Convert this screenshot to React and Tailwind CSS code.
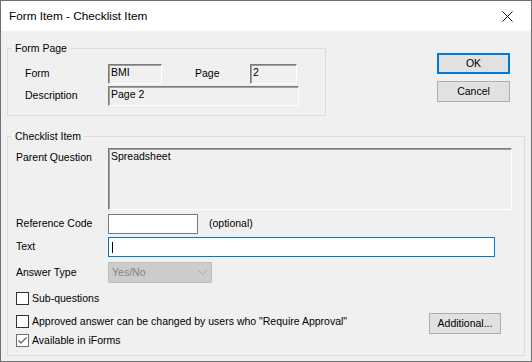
import React from 'react';

const font = { fontFamily: '"Liberation Sans", Arial, sans-serif' };

function SunkenBox({ className = '', children }) {
  return (
    <div
      className={`border-t border-l border-r border-b border-t-[#7a7a7a] border-l-[#7a7a7a] border-r-white border-b-white shadow-[inset_1px_1px_0_#a0a0a0] pl-[2px] pt-[1px] leading-[13px] text-[10.5px] text-black bg-[#f0f0f0] ${className}`}
    >
      {children}
    </div>
  );
}

function Checkbox({ checked, label }) {
  return (
    <div className="flex items-center">
      <div
        className={`w-[13px] h-[13px] bg-white border ${checked ? 'border-[#6d6d6d]' : 'border-[#333333]'} flex items-center justify-center`}
      >
        {checked && (
          <svg width="11" height="11" viewBox="0 0 11 11">
            <path d="M1.5 5.5 L4 8 L9.5 2.5" fill="none" stroke="#5a5a5a" strokeWidth="1.2" />
          </svg>
        )}
      </div>
      <span className="ml-[3px] text-[10.5px] leading-[13px]">{label}</span>
    </div>
  );
}

function Button({ children, primary, className = '' }) {
  return (
    <button
      type="button"
      className={`h-[21px] text-[10.5px] leading-[13px] bg-[#e1e1e1] text-black ${primary ? 'border-2 border-[#0078d7]' : 'border border-[#adadad]'} ${className}`}
    >
      {children}
    </button>
  );
}

export default function App() {
  return (
    <div style={font} className="w-[532px] h-[362px] border border-[#6f6f6f] bg-[#f0f0f0] flex flex-col text-black">
      <div className="h-[30px] bg-white flex items-center justify-between pl-[8px] pr-[18px] shrink-0">
        <span className="text-[11.8px] leading-[16px]">Form Item - Checklist Item</span>
        <svg width="11" height="11" viewBox="0 0 11 11">
          <path d="M0.5 0.5 L10.5 10.5 M10.5 0.5 L0.5 10.5" stroke="#111" strokeWidth="1" />
        </svg>
      </div>

      <div className="pl-[6px] pt-[10px] text-[10.5px]">
        <div className="flex items-start">
          <fieldset className="w-[319px] border border-[#dcdcdc]">
            <legend className="ml-[4px] px-[3px] leading-[14px]">Form Page</legend>
            <div className="pt-[9px] pl-[17px] pb-[9px]">
              <div className="flex items-center h-[20px]">
                <span className="w-[83px]">Form</span>
                <SunkenBox className="w-[54px] h-[20px]">BMI</SunkenBox>
                <span className="ml-[33px] w-[55px]">Page</span>
                <SunkenBox className="w-[47px] h-[20px]">2</SunkenBox>
              </div>
              <div className="flex items-center h-[20px] mt-[2px]">
                <span className="w-[83px]">Description</span>
                <SunkenBox className="w-[191px] h-[20px]">Page 2</SunkenBox>
              </div>
            </div>
          </fieldset>
          <div className="ml-[111px] mt-[12px] flex flex-col">
            <Button primary className="w-[73px]">OK</Button>
            <Button className="w-[73px] mt-[7px]">Cancel</Button>
          </div>
        </div>

        <fieldset className="w-[518px] h-[227px] mt-[13px] border border-[#dcdcdc]">
          <legend className="ml-[4px] px-[3px] leading-[14px]">Checklist Item</legend>
          <div className="pt-[5px] pl-[8px]">
            <div className="flex items-start">
              <span className="w-[92px] mt-[3px] leading-[13px]">Parent Question</span>
              <SunkenBox className="w-[404px] h-[62px]">Spreadsheet</SunkenBox>
            </div>
            <div className="flex items-center mt-[4px] h-[20px]">
              <span className="w-[92px]">Reference Code</span>
              <div className="w-[90px] h-[20px] bg-white border border-[#7a7a7a]" />
              <span className="ml-[11px]">(optional)</span>
            </div>
            <div className="flex items-center mt-[3px] h-[20px]">
              <span className="w-[92px]">Text</span>
              <div className="w-[387px] h-[20px] bg-white border border-[#0078d7] flex items-center pl-[3px]">
                <div className="w-px h-[11px] bg-black" />
              </div>
            </div>
            <div className="flex items-center mt-[5px] h-[21px]">
              <span className="w-[92px]">Answer Type</span>
              <div className="w-[104px] h-[21px] bg-[#cccccc] border border-[#bfbfbf] flex items-center justify-between pl-[3px] pr-[4px]">
                <span className="text-[#838383]">Yes/No</span>
                <svg width="9" height="5" viewBox="0 0 9 5">
                  <path d="M0.5 0.5 L4.5 4.5 L8.5 0.5" fill="none" stroke="#a6a6a6" strokeWidth="1" />
                </svg>
              </div>
            </div>
            <div className="mt-[9px]">
              <Checkbox label="Sub-questions" />
            </div>
            <div className="flex items-start mt-[8px] h-[20px]">
              <div className="mt-[2px]">
                <Checkbox label={'Approved answer can be changed by users who "Require Approval"'} />
              </div>
              <Button className="w-[72px] ml-auto mr-[23px]">Additional...</Button>
            </div>
            <div className="mt-[1px]">
              <Checkbox checked label="Available in iForms" />
            </div>
          </div>
        </fieldset>
      </div>
    </div>
  );
}
